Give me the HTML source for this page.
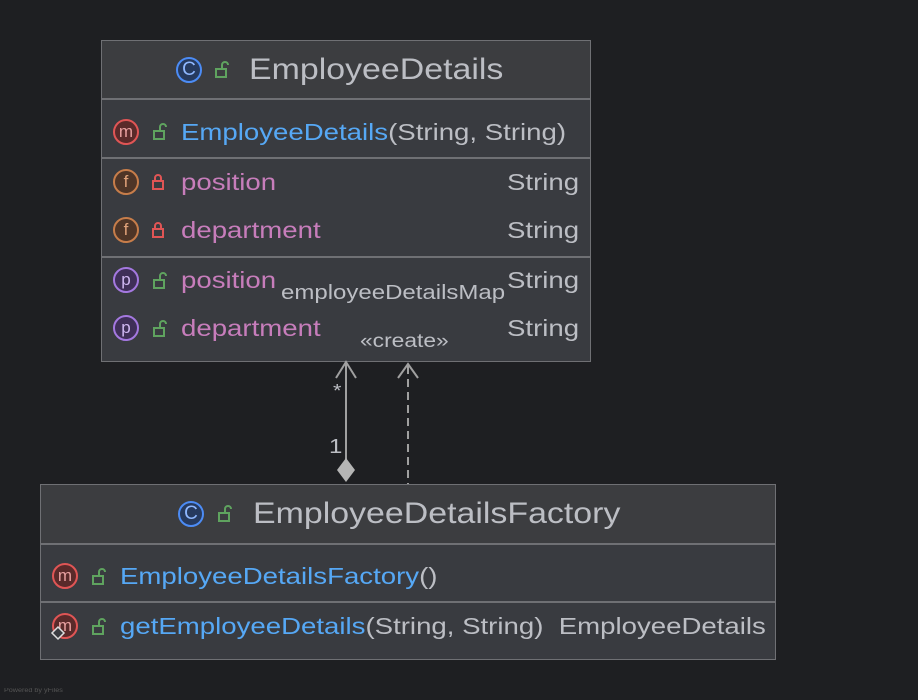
<html><head><style>
body{margin:0;width:918px;height:700px;background:#1e1f22;position:relative;overflow:hidden;font-family:"Liberation Sans",sans-serif}
.box{position:absolute;background:#393b40;border:1px solid #6f7074;box-sizing:border-box}
.sep{position:absolute;left:0;right:0;height:2px;background:#6f7074}
.t{position:absolute;white-space:nowrap;font-size:23px;line-height:1;transform:scaleX(1.2);transform-origin:0 0}
.ti{transform:scaleX(1.13)}
.ic{position:absolute;width:26px;height:26px;border-radius:50%;border:2px solid;box-sizing:border-box;font-size:17px;text-align:center;line-height:21px}
.m{border-color:#e05555;background:#5a2a2a;color:#e8a0a0}
.f{border-color:#c77d4a;background:#4e3527;color:#e0a27a}
.p{border-color:#a478e0;background:#3f2f58;color:#d0b8f2}
.c{border-color:#4c8cf5;background:#263a5e;color:#8fb8ff;font-size:19px}
.blue{color:#56a8f5}.pink{color:#c77dbb}.gray{color:#bcbec4}
</style></head><body>
<div class="box" style="left:101px;top:40px;width:490px;height:322px">
 <div style="position:absolute;left:0;right:0;top:0;height:58px;background:#3c3d40"></div>
 <div class="sep" style="top:57px"></div>
 <div class="sep" style="top:116px"></div>
 <div class="sep" style="top:215px"></div>
</div>
<div class="box" style="left:40px;top:484px;width:736px;height:176px">
 <div style="position:absolute;left:0;right:0;top:0;height:58px;background:#3c3d40"></div>
 <div class="sep" style="top:58px"></div>
 <div class="sep" style="top:116px"></div>
</div>
<svg width="918" height="700" style="position:absolute;left:0;top:0">
 <g fill="none" stroke-width="2">
  <g stroke="#5fa35f">
   <rect x="216" y="69" width="10" height="8"/><path d="M222 69v-4a3 3 0 0 1 6 0"/>
   <rect x="154" y="131" width="10" height="8"/><path d="M160 131v-4a3 3 0 0 1 6 0"/>
   <rect x="154" y="280" width="10" height="8"/><path d="M160 280v-4a3 3 0 0 1 6 0"/>
   <rect x="154" y="328" width="10" height="8"/><path d="M160 328v-4a3 3 0 0 1 6 0"/>
   <rect x="219" y="513" width="10" height="8"/><path d="M225 513v-4a3 3 0 0 1 6 0"/>
   <rect x="93" y="576" width="10" height="8"/><path d="M99 576v-4a3 3 0 0 1 6 0"/>
   <rect x="93" y="626" width="10" height="8"/><path d="M99 626v-4a3 3 0 0 1 6 0"/>
  </g>
  <g stroke="#e05555">
   <rect x="153" y="181" width="10" height="8"/><path d="M155 181v-3a3 3 0 0 1 6 0v3"/>
   <rect x="153" y="229" width="10" height="8"/><path d="M155 229v-3a3 3 0 0 1 6 0v3"/>
  </g>
  <g stroke="#a0a0a0">
   <path d="M346 362V470"/><path d="M336 378l10-16 10 16"/>
   <path d="M408 366V484" stroke-dasharray="8 5"/><path d="M398 378l10-14 10 14"/>
  </g>
 </g>
 <path d="M346 458l9 12-9 12-9-12z" fill="#b5b5b5"/>
</svg>
<div class="ic c" style="left:176px;top:57px">C</div>
<div class="t ti gray" style="left:249px;top:55px;font-size:30px">EmployeeDetails</div>
<div class="ic m" style="left:113px;top:119px">m</div>
<div class="t" style="left:181px;top:121px"><span class="blue">EmployeeDetails</span><span class="gray">(String, String)</span></div>
<div class="ic f" style="left:113px;top:169px">f</div>
<div class="t pink" style="left:181px;top:171px">position</div>
<div class="t gray" style="left:507px;top:171px">String</div>
<div class="ic f" style="left:113px;top:217px">f</div>
<div class="t pink" style="left:181px;top:219px">department</div>
<div class="t gray" style="left:507px;top:219px">String</div>
<div class="ic p" style="left:113px;top:267px">p</div>
<div class="t pink" style="left:181px;top:269px">position</div>
<div class="t gray" style="left:507px;top:269px">String</div>
<div class="ic p" style="left:113px;top:315px">p</div>
<div class="t pink" style="left:181px;top:317px">department</div>
<div class="t gray" style="left:507px;top:317px">String</div>
<div class="t gray" style="left:281px;top:283px;font-size:20px">employeeDetailsMap</div>
<div class="t gray" style="left:360px;top:332px;font-size:19px">«create»</div>
<div class="t gray" style="left:333px;top:382px;font-size:18px">*</div>
<div class="t gray" style="left:329px;top:437px;font-size:20px">1</div>
<div class="ic c" style="left:178px;top:501px">C</div>
<div class="t ti gray" style="left:253px;top:499px;font-size:30px">EmployeeDetailsFactory</div>
<div class="ic m" style="left:52px;top:563px">m</div>
<div class="t" style="left:120px;top:565px"><span class="blue">EmployeeDetailsFactory</span><span class="gray">()</span></div>
<div class="ic m" style="left:52px;top:613px">m</div>
<div class="t" style="left:120px;top:615px"><span class="blue">getEmployeeDetails</span><span class="gray">(String, String)&nbsp; EmployeeDetails</span></div>
<svg width="918" height="700" style="position:absolute;left:0;top:0"><path d="M58 627l6 6-6 6-6-6z" fill="#393b40" stroke="#ddd" stroke-width="1.5"/></svg>
<div class="t" style="left:4px;top:688px;font-size:6px;color:#555">Powered by yFiles</div>
</body></html>
